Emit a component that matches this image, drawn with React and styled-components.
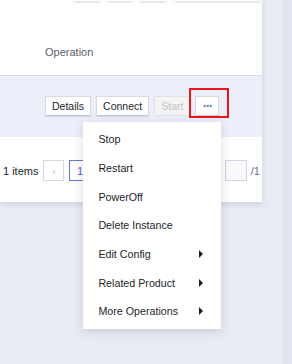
import styled, { createGlobalStyle } from "styled-components";

const GlobalStyle = createGlobalStyle`
  html, body {
    margin: 0;
    padding: 0;
    background: #eaecf4;
    font-family: "Liberation Sans", Arial, sans-serif;
    overflow: hidden;
  }
`;

const menuItems = [
  { label: "Stop" },
  { label: "Restart" },
  { label: "PowerOff" },
  { label: "Delete Instance" },
  { label: "Edit Config", sub: true },
  { label: "Related Product", sub: true },
  { label: "More Operations", sub: true },
];

function App() {
  return (
    <>
      <GlobalStyle />
      <Page>
        <Card>
          <Toolbar>
            <ToolBox $w={25} />
            <ToolBox $w={26} />
            <ToolBox $w={25} />
            <ToolBox $w={86} />
          </Toolbar>
          <HeaderRow>
            <HeaderCell>Operation</HeaderCell>
          </HeaderRow>
          <DataRow>
            <Actions>
              <Button>Details</Button>
              <Button>Connect</Button>
              <Button disabled>Start</Button>
              <MoreWrap>
                <Button $more>···</Button>
                <Highlight />
                <Menu>
                  {menuItems.map((item) => (
                    <MenuItem key={item.label}>
                      {item.label}
                      {item.sub && <Caret />}
                    </MenuItem>
                  ))}
                </Menu>
              </MoreWrap>
            </Actions>
          </DataRow>
          <Pager>
            <Total>1 items</Total>
            <PageBtn>‹</PageBtn>
            <PageBtn $active>1</PageBtn>
            <Spacer />
            <PageBtn $w={24} />
            <PageInput />
            <PageTotal>/1</PageTotal>
          </Pager>
        </Card>
        <Gutter />
        <SideStrip />
      </Page>
    </>
  );
}

const Page = styled.div`
  display: flex;
  height: 364px;
`;

const Card = styled.div`
  width: 262px;
  height: 202px;
  background: #fff;
  box-shadow: 0 2px 6px rgba(30, 40, 80, 0.14);
  display: flex;
  flex-direction: column;
`;

const Gutter = styled.div`
  width: 20px;
`;

const SideStrip = styled.div`
  width: 10px;
  background: #e2e5f0;
`;

const Toolbar = styled.div`
  display: flex;
  justify-content: flex-end;
  gap: 8px;
  padding-right: 2px;
  height: 2px;
`;

const ToolBox = styled.div`
  width: ${(p) => p.$w}px;
  height: 22px;
  margin-top: -21px;
  background: #fff;
  box-shadow: 0 1px 3px rgba(30, 40, 80, 0.2);
`;

const HeaderRow = styled.div`
  height: 74px;
  display: flex;
  align-items: flex-end;
  padding: 0 0 17px 45px;
  box-sizing: border-box;
  border-bottom: 1px solid #d4d8e8;
`;

const HeaderCell = styled.span`
  font-size: 11px;
  color: #5b606c;
`;

const DataRow = styled.div`
  height: 61px;
  background: #eceefa;
  padding: 20px 0 0 45px;
  box-sizing: border-box;
`;

const Actions = styled.div`
  display: flex;
  gap: 5px;
`;

const Button = styled.button`
  position: relative;
  height: 20px;
  padding: 0 ${(p) => (p.$more ? 0 : 6)}px;
  width: ${(p) => (p.$more ? "24px" : "auto")};
  font-family: inherit;
  font-size: ${(p) => (p.$more ? "12px" : "10.5px")};
  font-weight: ${(p) => (p.$more ? 700 : 400)};
  line-height: 18px;
  color: ${(p) => (p.$more ? "#526ecc" : "#1b1f2b")};
  letter-spacing: ${(p) => (p.$more ? "-1px" : "0")};
  background: #fff;
  border: 1px solid #d7dae4;
  border-bottom-color: #c4c8d6;
  border-radius: 1px;
  box-shadow: 0 1px 1px rgba(40, 50, 90, 0.12);

  &:disabled {
    color: #c2c2c2;
    background: #f4f4f5;
    border-color: #e2e3e6;
    box-shadow: none;
  }
`;

const MoreWrap = styled.div`
  position: relative;
  display: flex;
`;

const Highlight = styled.span`
  position: absolute;
  left: -6px;
  right: -10px;
  top: -8px;
  bottom: -2px;
  border: 2px solid #e8171c;
  pointer-events: none;
`;

const Menu = styled.div`
  position: absolute;
  left: -112px;
  top: 26px;
  width: 138px;
  padding: 3px 0;
  background: #fff;
  box-shadow: 0 3px 10px rgba(30, 40, 80, 0.16);
  z-index: 5;
`;

const MenuItem = styled.div`
  height: 28.7px;
  display: flex;
  align-items: center;
  justify-content: space-between;
  padding: 0 18px 0 15px;
  font-size: 10.7px;
  color: #1b1f2b;
`;

const Caret = styled.span`
  width: 0;
  height: 0;
  border-top: 4px solid transparent;
  border-bottom: 4px solid transparent;
  border-left: 4px solid #1b1f2b;
`;

const Pager = styled.div`
  flex: 1;
  display: flex;
  align-items: center;
  padding: 2px 0 0 3px;
  gap: 5px;
  font-size: 11px;
  color: #1b1f2b;
`;

const Total = styled.span`
  white-space: nowrap;
  flex-shrink: 0;
`;

const PageBtn = styled.div`
  width: ${(p) => (p.$w ? p.$w : 21)}px;
  height: 21px;
  flex-shrink: 0;
  box-sizing: border-box;
  display: flex;
  align-items: center;
  justify-content: center;
  border: 1px solid ${(p) => (p.$active ? "#5e7ce0" : "#d7d9e0")};
  color: ${(p) => (p.$active ? "#5e58d6" : "#b8bac2")};
  font-size: 11px;
`;

const Spacer = styled.div`
  flex: 1;
`;

const PageInput = styled.div`
  width: 22px;
  height: 21px;
  flex-shrink: 0;
  box-sizing: border-box;
  border: 1px solid #cfd3e6;
  background: #fafafc;
`;

const PageTotal = styled.span`
  color: #6b7085;
  white-space: nowrap;
  margin-left: -1px;
  margin-right: 2px;
`;

export default App;
